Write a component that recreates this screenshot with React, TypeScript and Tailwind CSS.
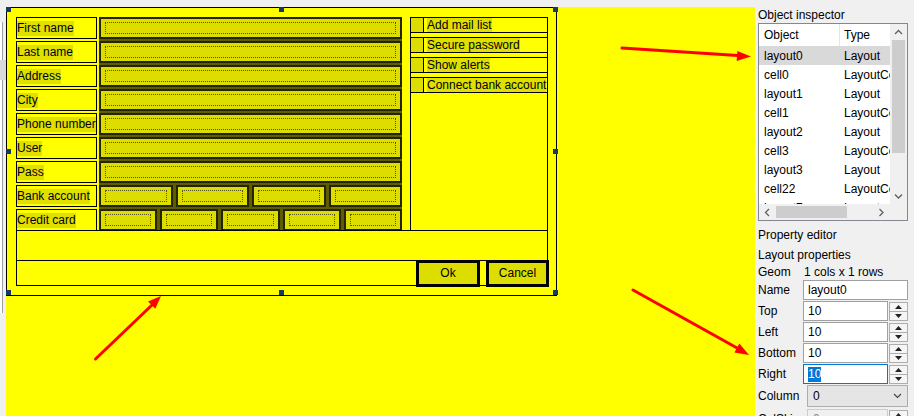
import React from "react";

const labels = [
  "First name",
  "Last name",
  "Address",
  "City",
  "Phone number",
  "User",
  "Pass",
  "Bank account",
  "Credit card",
];

const fieldCounts = [1, 1, 1, 1, 1, 1, 1, 4, 5];

const checks = ["Add mail list", "Secure password", "Show alerts", "Connect bank account"];

const objects = [
  ["layout0", "Layout"],
  ["cell0", "LayoutCell"],
  ["layout1", "Layout"],
  ["cell1", "LayoutCell"],
  ["layout2", "Layout"],
  ["cell3", "LayoutCell"],
  ["layout3", "Layout"],
  ["cell22", "LayoutCell"],
  ["layout7", "Layout"],
];

const handles = [
  "left-[0px] top-[0px]",
  "left-[273px] top-[0px]",
  "left-[547px] top-[0px]",
  "left-[0px] top-[142px]",
  "left-[547px] top-[142px]",
  "left-[0px] top-[283px]",
  "left-[273px] top-[283px]",
  "left-[547px] top-[283px]",
];

function Field() {
  return (
    <div className="h-[22px] flex-1 border-2 border-[#242400] bg-[#dddd00] px-[4px] py-[3px]">
      <div className="h-full border border-dotted border-[#55552a]" />
    </div>
  );
}

function Chevron({ dir }: { dir: "up" | "down" | "left" | "right" }) {
  const pts = {
    up: "1,5 4.5,1.5 8,5",
    down: "1,1.5 4.5,5 8,1.5",
    left: "5,1 1.5,4.5 5,8",
    right: "1.5,1 5,4.5 1.5,8",
  }[dir];
  const size = dir === "up" || dir === "down" ? { w: 9, h: 7 } : { w: 7, h: 9 };
  return (
    <svg width={size.w} height={size.h} viewBox={`0 0 ${size.w} ${size.h}`}>
      <polyline points={pts} fill="none" stroke="#606060" strokeWidth="1.3" />
    </svg>
  );
}

function Spinner() {
  return (
    <div className="ml-[1px] flex w-[19px] flex-col">
      <div className="flex h-[10px] items-center justify-center border border-[#adadad] bg-[#f5f5f5]">
        <svg width="7" height="4" viewBox="0 0 7 4">
          <polygon points="0,4 3.5,0 7,4" fill="#222" />
        </svg>
      </div>
      <div className="-mt-px flex h-[10px] items-center justify-center border border-[#adadad] bg-[#f5f5f5]">
        <svg width="7" height="4" viewBox="0 0 7 4">
          <polygon points="0,0 3.5,4 7,0" fill="#222" />
        </svg>
      </div>
    </div>
  );
}

function SpinRow({ label, focused }: { label: string; focused?: boolean }) {
  return (
    <div className="flex h-[20px] items-center">
      <div className="w-[45px] leading-[20px]">{label}</div>
      <div
        className={`flex h-full w-[85px] items-center border pl-[4px] ${
          focused ? "border-[#0078d7]" : "border-[#a0a0a0]"
        } bg-white`}
      >
        {focused ? <span className="bg-[#0078d7] leading-[15px] text-white">10</span> : "10"}
      </div>
      <Spinner />
    </div>
  );
}

function DesignForm() {
  return (
    <div className="h-[289px] w-[551px] border border-black pb-[9px] pl-[9px] pr-[8px] pt-[9px]">
      <div className="flex h-[269px] w-[532px] flex-col">
        {/* grid rows */}
        <div className="flex h-[214px]">
          <div className="flex w-[81px] flex-col gap-[2px]">
            {labels.map((l) => (
              <div key={l} className="flex h-[22px] items-center border border-black">
                <span className="whitespace-nowrap bg-[#e0e000] leading-[15px]">{l}</span>
              </div>
            ))}
          </div>

          <div className="ml-[2px] flex w-[303px] flex-col gap-[2px] bg-[#5e5e00]">
            {fieldCounts.map((n, i) => (
              <div key={i} className="flex gap-[3px]">
                {Array.from({ length: n }).map((_, j) => (
                  <Field key={j} />
                ))}
              </div>
            ))}
          </div>

          <div className="ml-[8px] flex w-[138px] flex-col gap-[4px] overflow-hidden border-x border-black">
            {checks.map((c) => (
              <div key={c} className="flex h-[16px] border-y border-black">
                <div className="w-[13px] shrink-0 border-r border-black bg-[#dddd00]" />
                <span className="ml-[3px] self-center whitespace-nowrap bg-[#e0e000] leading-[14px]">
                  {c}
                </span>
              </div>
            ))}
          </div>
        </div>

        <div className="-mt-px h-[30px] border-x border-t border-black" />

        <div className="flex h-[26px] items-center justify-end gap-[6px] border border-black">
          <button className="h-[27px] w-[64px] border-[3px] border-black bg-[#dddd00] text-[12px]">
            Ok
          </button>
          <button className="-mr-[2px] h-[27px] w-[63px] border-[3px] border-black bg-[#dddd00] text-[12px]">
            Cancel
          </button>
        </div>
      </div>
    </div>
  );
}

function ObjectInspector() {
  return (
    <div className="flex h-[198px] w-[150px] flex-col border border-[#828790] bg-white">
      <div className="flex min-h-0 flex-1">
        <div className="w-[131px] overflow-hidden">
          <div className="flex h-[22px] items-center">
            <div className="w-[81px] shrink-0 border-r border-[#e5e5e5] pl-[5px] leading-[22px]">Object</div>
            <div className="shrink-0 pl-[4px]">Type</div>
          </div>
          {objects.map(([o, t], i) => (
            <div
              key={o}
              className={`flex h-[19px] items-center whitespace-nowrap ${i === 0 ? "bg-[#d9d9d9]" : ""}`}
            >
              <div className="w-[81px] shrink-0 pl-[5px]">{o}</div>
              <div className="shrink-0 pl-[4px]">{t}</div>
            </div>
          ))}
        </div>
        <div className="flex w-[17px] flex-col bg-[#f0f0f0]">
          <div className="flex h-[16px] items-center justify-center">
            <Chevron dir="up" />
          </div>
          <div className="mx-[2px] h-[113px] bg-[#cdcdcd]" />
          <div className="flex-1" />
          <div className="flex h-[16px] items-center justify-center">
            <Chevron dir="down" />
          </div>
        </div>
      </div>
      <div className="flex h-[16px] bg-[#f0f0f0]">
        <div className="flex w-[131px] items-center">
          <div className="flex w-[17px] justify-center">
            <Chevron dir="left" />
          </div>
          <div className="h-[12px] w-[71px] bg-[#cdcdcd]" />
          <div className="flex-1" />
          <div className="flex w-[17px] justify-center">
            <Chevron dir="right" />
          </div>
        </div>
        <div className="w-[17px]" />
      </div>
    </div>
  );
}

function SidePanel() {
  return (
    <div className="flex w-[159px] flex-col pl-[3px]">
      <div className="mt-[7px] h-[16px] leading-[16px]">Object inspector</div>
      <ObjectInspector />

      <div className="mt-[4px] h-[20px] leading-[20px]">Property editor</div>
      <div className="h-[20px] leading-[20px]">Layout properties</div>
      <div className="flex h-[15px] items-center leading-[15px]">
        <div className="w-[46px]">Geom</div>
        <div>1 cols x 1 rows</div>
      </div>

      <div className="flex flex-col gap-[1px]">
        <div className="flex h-[20px] items-center">
          <div className="w-[45px]">Name</div>
          <div className="flex h-full w-[105px] items-center border border-[#a0a0a0] bg-white pl-[4px]">
            layout0
          </div>
        </div>
        <SpinRow label="Top" />
        <SpinRow label="Left" />
        <SpinRow label="Bottom" />
        <SpinRow label="Right" focused />
        <div className="flex h-[22px] items-center">
          <div className="w-[49px]">Column</div>
          <div className="flex h-full w-[101px] items-center justify-between border border-[#adadad] bg-[#e5e5e5] pl-[5px] pr-[5px]">
            <span>0</span>
            <svg width="9" height="6" viewBox="0 0 9 6">
              <polyline points="1,1 4.5,4.5 8,1" fill="none" stroke="#444" strokeWidth="1.2" />
            </svg>
          </div>
        </div>
        <div className="mt-[1px] flex h-[20px] items-center">
          <div className="w-[49px]">ColSkip</div>
          <div className="flex h-full w-[81px] items-center border border-[#cccccc] bg-[#f0f0f0] pl-[5px] text-[#888]">
            0
          </div>
          <Spinner />
        </div>
      </div>
    </div>
  );
}

function Arrows() {
  return (
    <svg className="pointer-events-none absolute left-0 top-0" width="914" height="416" viewBox="0 0 914 416">
      <g stroke="#ff0000" strokeWidth="3" strokeLinecap="round" fill="none">
        <line x1="622" y1="48" x2="738" y2="55.5" />
        <line x1="633" y1="290" x2="738" y2="348.5" />
        <line x1="95.5" y1="359" x2="152" y2="305" />
      </g>
      <g fill="#ff0000">
        <polygon points="751,56.5 737.3,51 736.7,61" />
        <polygon points="749,355 739.4,343.6 734.4,352.6" />
        <polygon points="161,296 155.3,308.8 148,301.4" />
      </g>
    </svg>
  );
}

export default function App() {
  return (
    <div className="relative flex h-[416px] w-[914px] overflow-hidden bg-[#f0f0f0] font-['Liberation_Sans',Arial,sans-serif] text-[12px] text-black">
      {/* window behind the canvas */}
      <div className="flex w-[6px] flex-col pt-[22px]">
        <div className="flex h-[291px] w-[3px] flex-col border-r border-[#a0a0a0] bg-white">
          <div className="mt-[38px] h-[20px] w-[6px] bg-[#d9d9d9]" />
        </div>
      </div>

      {/* design canvas */}
      <div className="flex w-[749px] flex-col">
        <div className="h-[7px]" />
        <div className="relative flex-1 bg-[#ffff00]">
          <DesignForm />
          {handles.map((h) => (
            <div key={h} className={`absolute h-[5px] w-[5px] bg-[#173a5e] ${h}`} />
          ))}
        </div>
      </div>

      <SidePanel />
      <Arrows />
    </div>
  );
}
